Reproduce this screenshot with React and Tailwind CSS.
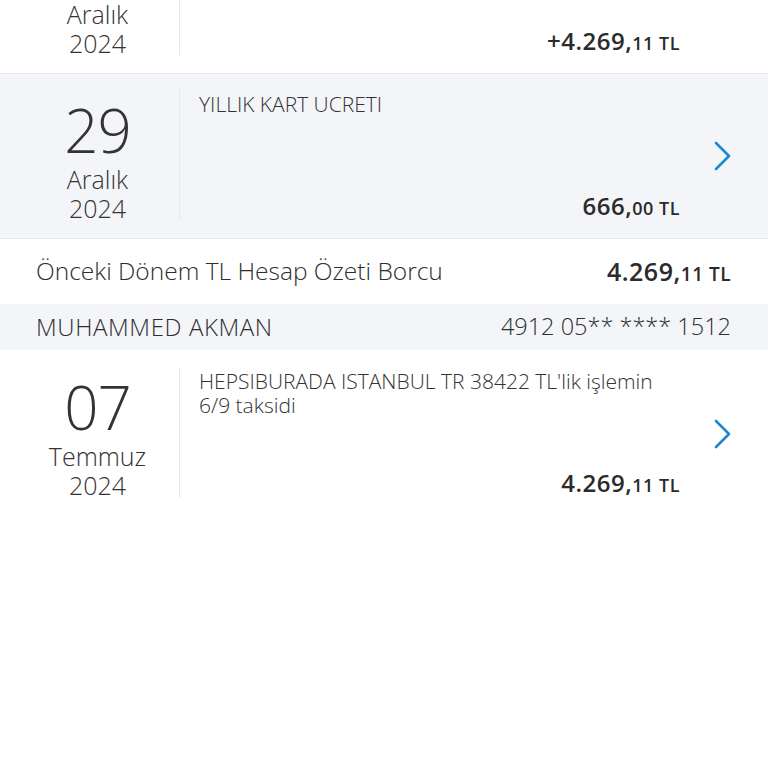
import React from "react";

const font = { fontFamily: '"Open Sans", "Noto Sans", sans-serif' };

function Chevron() {
  return (
    <svg width="20" height="30" viewBox="0 0 20 30" fill="none" className="shrink-0">
      <path d="M3 2 L16 15 L3 28" stroke="#1d87d2" strokeWidth="2.6" strokeLinecap="round" strokeLinejoin="round" />
    </svg>
  );
}

function Amount({ main, dec }) {
  return (
    <span className="text-[#2b2b2b] font-semibold whitespace-nowrap tracking-[0.5px]">
      <span className="text-[24px]">{main}</span>
      <span className="text-[18px]">{dec} TL</span>
    </span>
  );
}

function DateCol({ day, month, year, pt }) {
  return (
    <div className={`w-[179px] shrink-0 pl-[16px] flex flex-col items-center text-[#333] ${pt}`}>
      {day && <div className="text-[60px] font-light leading-[64px] tracking-[-1px] mb-[3px]">{day}</div>}
      <div className="text-[25px] font-light leading-[29px]">{month}</div>
      <div className="text-[25px] font-light leading-[29px]">{year}</div>
    </div>
  );
}

export default function App() {
  return (
    <div style={font} className="w-[768px] h-[768px] bg-white overflow-hidden">
      {/* partial top row */}
      <div className="flex border-b border-[#e3e6eb] bg-white h-[74px]">
        <DateCol month="Aralık" year="2024" pt="pt-0" />
        <div className="flex-1 flex pb-[18px]">
          <div className="w-px bg-[#e3e7ee]" />
          <div className="flex-1 flex flex-col justify-end pl-[19px] pr-[88px]">
            <div className="text-right leading-[26px] -mb-[2px]">
              <Amount main="+4.269," dec="11" />
            </div>
          </div>
        </div>
      </div>

      {/* 29 Aralık */}
      <div className="flex border-b border-[#e3e6eb] bg-[#f3f5f9] h-[165px]">
        <DateCol day="29" month="Aralık" year="2024" pt="pt-[24px]" />
        <div className="flex-1 flex pt-[16px] pb-[18px]">
          <div className="w-px bg-[#e3e7ee]" />
          <div className="flex-1 flex flex-col pl-[19px] pr-[88px] relative">
            <div className="text-[21px] font-light text-[#333] leading-[24px] pt-[2px]">YILLIK KART UCRETI</div>
            <div className="flex-1" />
            <div className="text-right leading-[26px] -mb-[2px]">
              <Amount main="666," dec="00" />
            </div>
            <div className="absolute right-[35px] top-1/2 -translate-y-1/2 mt-[1px]">
              <Chevron />
            </div>
          </div>
        </div>
      </div>

      {/* Önceki dönem */}
      <div className="flex items-center justify-between h-[65px] pl-[36px] pr-[37px] bg-white">
        <span className="text-[24.5px] font-light text-[#2e2e2e]">Önceki Dönem TL Hesap Özeti Borcu</span>
        <span className="text-[#2b2b2b] font-semibold whitespace-nowrap tracking-[0.5px]">
          <span className="text-[25px]">4.269,</span>
          <span className="text-[19px]">11 TL</span>
        </span>
      </div>

      {/* card holder */}
      <div className="flex items-center justify-between h-[46px] pl-[36px] pr-[37px] bg-[#f3f5f9]">
        <span className="text-[24px] font-light text-[#2e2e2e] tracking-[0.6px]">MUHAMMED AKMAN</span>
        <span className="text-[23.5px] font-light text-[#2e2e2e]">4912 05** **** 1512</span>
      </div>

      {/* 07 Temmuz */}
      <div className="flex bg-white">
        <DateCol day="07" month="Temmuz" year="2024" pt="pt-[25px]" />
        <div className="flex-1 flex pt-[18px]">
          <div className="w-px bg-[#e3e7ee] h-[130px]" />
          <div className="flex-1 flex flex-col pl-[19px] pr-[88px] relative h-[130px]">
            <div className="text-[21px] font-light text-[#333] leading-[24px] pt-[1px]">
              HEPSIBURADA ISTANBUL TR 38422 TL'lik işlemin
              <br />
              6/9 taksidi
            </div>
            <div className="flex-1" />
            <div className="text-right leading-[26px] -mb-[1px]">
              <Amount main="4.269," dec="11" />
            </div>
            <div className="absolute right-[35px] top-[51px]">
              <Chevron />
            </div>
          </div>
        </div>
      </div>
    </div>
  );
}
